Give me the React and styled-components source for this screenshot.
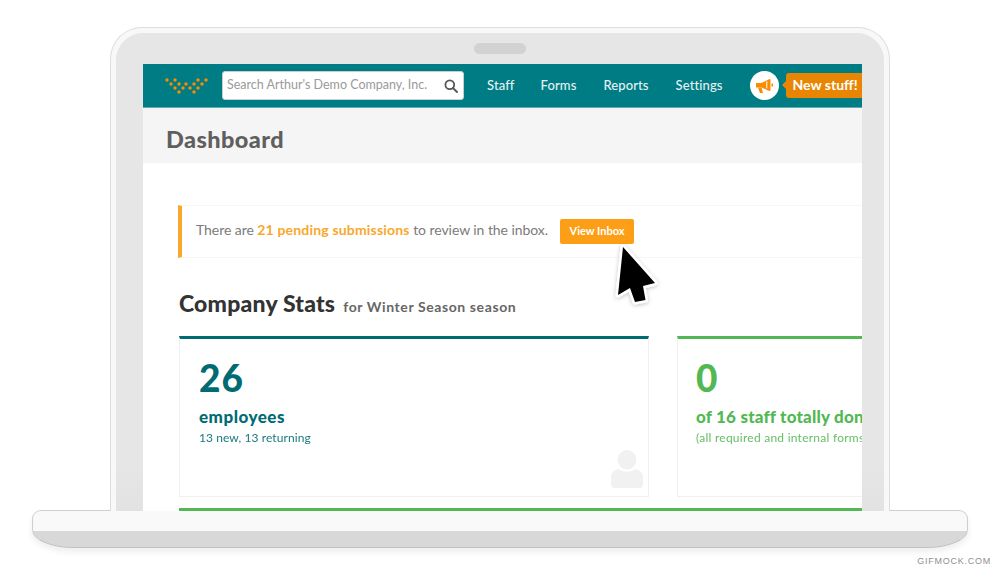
import React from "react";
import styled, { createGlobalStyle } from "styled-components";

const Global = createGlobalStyle`
  html, body { margin: 0; padding: 0; background: #fff; }
  * { box-sizing: border-box; }
`;

const UI = `"Lato", "Noto Sans", sans-serif`;

const Stage = styled.div`
  position: relative;
  width: 1000px;
  height: 575px;
  overflow: hidden;
  padding-top: 27px;
  display: flex;
  flex-direction: column;
  align-items: center;
  background: #fff;
  font-family: ${UI};
`;
const Lid = styled.div`
  position: relative;
  z-index: 2;
  width: 780px;
  height: 484px;
  padding: 5px 5px 0;
  background: #f8f8f8;
  border: 1px solid #ddd;
  border-bottom: 0;
  border-radius: 32px 32px 0 0;
`;
const Bezel = styled.div`
  height: 100%;
  display: flex;
  flex-direction: column;
  align-items: center;
  background: linear-gradient(#e6e6e6 90%, #e2e2e2);
  border-radius: 27px 27px 0 0;
  overflow: hidden;
`;
const Camera = styled.div`
  flex: none;
  width: 52px;
  height: 11px;
  margin: 10px 0;
  border-radius: 6px;
  background: #d2d2d2;
`;
const Screen = styled.div`
  align-self: stretch;
  flex: 1;
  margin: 0 22px 0 27px;
  background: #fff;
  overflow: hidden;
`;
const Nav = styled.nav`
  height: 44px;
  display: flex;
  align-items: center;
  background: #007c85;
  border-bottom: 1px solid #5fa9af;
  color: #e4f1f2;
`;
const Logo = styled.svg`
  flex: none;
  width: 44px;
  height: 16px;
  margin: 0 13px 0 22px;
`;
const Search = styled.div`
  flex: none;
  width: 242px;
  height: 29px;
  display: flex;
  align-items: center;
  justify-content: space-between;
  padding: 0 5px 0 4px;
  background: #fff;
  border: 1px solid #c9cfd0;
  border-radius: 3px;
  color: #9a9a9a;
  font-size: 12.5px;
  white-space: nowrap;
`;
const SearchText = styled.span`
  margin-bottom: 2px;
`;
const NavLink = styled.a`
  flex: none;
  margin-left: ${(p) => p.$gap}px;
  margin-bottom: 2px;
  font-size: 13px;
  font-weight: 500;
  letter-spacing: 0.1px;
`;
const Horn = styled.div`
  flex: none;
  width: 29px;
  height: 29px;
  margin-left: 27px;
  border-radius: 50%;
  background: #fff;
  display: flex;
  align-items: center;
  justify-content: center;
`;
const Badge = styled.div`
  position: relative;
  flex: none;
  width: 84px;
  height: 25px;
  margin-left: 7px;
  padding: 0 0 2px 7px;
  display: flex;
  align-items: center;
  background: #e88503;
  border-radius: 3px 0 0 3px;
  color: #fff;
  font-size: 14px;
  font-weight: 700;
  white-space: nowrap;
  &::before {
    content: "";
    position: absolute;
    left: -4px;
    top: 8px;
    border: 4px solid transparent;
    border-left: 0;
    border-right-color: #e88503;
  }
`;
const Header = styled.header`
  height: 55px;
  padding: 7px 0 0 23px;
  display: flex;
  align-items: center;
  background: #f5f5f5;
`;
const Title = styled.h1`
  margin: 0;
  font-size: 23.5px;
  font-weight: 900;
  letter-spacing: 0.4px;
  color: #5f5f5f;
`;
const Content = styled.main`
  width: 1000px;
  padding: 42px 0 0 36px;
`;
const Alert = styled.div`
  height: 53px;
  margin-left: -1px;
  display: flex;
  align-items: center;
  padding-left: 14px;
  background: #fff;
  border: 1px solid #f6f6f6;
  border-left: 4px solid #f9a72d;
  color: #7b7b7b;
  font-size: 14px;
  white-space: nowrap;
`;
const AlertText = styled.span`
  margin-bottom: 4px;
  letter-spacing: -0.06px;
`;
const Strong = styled.strong`
  color: #f9a72d;
  font-weight: 700;
  letter-spacing: 0.18px;
`;
const ViewBtn = styled.button`
  width: 74px;
  height: 25px;
  margin-left: 12px;
  padding: 0 0 2px;
  border: 0;
  border-radius: 2px;
  background: #fd9f16;
  color: #fff;
  font-family: inherit;
  font-size: 11px;
  font-weight: 700;
`;
const Heading = styled.h2`
  margin: 31px 0 19px;
  height: 28px;
  display: flex;
  align-items: baseline;
  gap: 8px;
  color: #333;
  font-size: 23px;
  font-weight: 900;
  letter-spacing: 0.2px;
  white-space: nowrap;
`;
const Sub = styled.span`
  color: #666;
  font-size: 14px;
  font-weight: 700;
  letter-spacing: 0.6px;
`;
const Cards = styled.div`
  display: flex;
  gap: 28px;
`;
const Card = styled.section`
  position: relative;
  flex: none;
  width: 470px;
  height: 161px;
  padding: 19px 19px 0 ${(p) => p.$inset}px;
  background: #fff;
  border: 1px solid #f0f0f0;
  border-top: 3px solid ${(p) => p.$color};
  color: ${(p) => p.$color};
  white-space: nowrap;
`;
const Num = styled.div`
  font-size: 37px;
  font-weight: 900;
  line-height: 40px;
  letter-spacing: 1px;
`;
const Label = styled.div`
  margin-top: 9px;
  font-size: 17px;
  font-weight: 900;
  line-height: 20px;
  letter-spacing: ${(p) => p.$spacing}px;
`;
const Note = styled.div`
  margin-top: 3px;
  font-size: 12px;
  line-height: 16px;
  letter-spacing: ${(p) => p.$spacing}px;
  opacity: 0.9;
`;
const Person = styled.svg`
  position: absolute;
  right: 5px;
  bottom: 8px;
  width: 32px;
  height: 38px;
`;
const NextBar = styled.div`
  height: 3px;
  margin-top: 11px;
  background: #53b853;
`;
const Base = styled.div`
  position: relative;
  z-index: 1;
  flex: none;
  width: 936px;
  height: 38px;
  margin-top: -1px;
  border: 1px solid #cfcfcf;
  border-bottom-color: #c0c0c0;
  border-radius: 9px 9px 42px 42px / 9px 9px 18px 18px;
  background: linear-gradient(#f9f9f9 0 20px, #d8d8d8 20px);
  box-shadow: 0 4px 6px rgba(0, 0, 0, 0.07);
`;
const Mark = styled.div`
  align-self: flex-end;
  margin: 8px 9px 0 0;
  font-family: "Liberation Sans", Arial, sans-serif;
  font-size: 9px;
  line-height: 11px;
  letter-spacing: 0.75px;
  color: #8f8f8f;
`;
const Pointer = styled.svg`
  position: absolute;
  z-index: 5;
  left: 605px;
  top: 235px;
  width: 65px;
  height: 80px;
  overflow: visible;
`;

const dots = [
  [2, 2], [10, 2], [33, 2], [41, 2],
  [6, 6], [14, 6], [21, 6], [29, 6], [37, 6],
  [10, 10], [18, 10], [25, 10], [33, 10],
  [14, 14], [29, 14],
];

export default function App() {
  return (
    <Stage>
      <Global />
      <Lid>
        <Bezel>
          <Camera />
          <Screen>
            <Nav>
              <Logo viewBox="0 0 44 16">
                {dots.map(([x, y]) => (
                  <circle key={`${x}-${y}`} cx={x} cy={y} r="1.7" fill="#fb8c00" />
                ))}
              </Logo>
              <Search>
                <SearchText>Search Arthur's Demo Company, Inc.</SearchText>
                <svg width="14" height="14" viewBox="0 0 14 14" fill="none" stroke="#555" strokeWidth="1.8">
                  <circle cx="5.8" cy="5.8" r="4.4" />
                  <path d="M9 9l4 4" strokeLinecap="round" />
                </svg>
              </Search>
              <NavLink $gap={23}>Staff</NavLink>
              <NavLink $gap={26}>Forms</NavLink>
              <NavLink $gap={27}>Reports</NavLink>
              <NavLink $gap={27}>Settings</NavLink>
              <Horn>
                <svg width="19" height="18" viewBox="0 0 19 18">
                  <path d="M1 6h5.500L14.500 2l1 .5v11l-1 .5-8-3.500H1z" fill="#fb8c00" />
                  <path d="M3 10.500h3.500l1.500 5.500H5z" fill="#fb8c00" />
                  <path d="M11.800 4.300v7" stroke="#fff" strokeWidth="1" />
                  <path d="M16.500 6.500h1.500v3h-1.500z" fill="#fb8c00" />
                </svg>
              </Horn>
              <Badge>New stuff!</Badge>
            </Nav>
            <Header>
              <Title>Dashboard</Title>
            </Header>
            <Content>
              <Alert>
                <AlertText>
                  There are <Strong>21 pending submissions</Strong> to review in the inbox.
                </AlertText>
                <ViewBtn>View Inbox</ViewBtn>
              </Alert>
              <Heading>
                Company Stats <Sub>for Winter Season season</Sub>
              </Heading>
              <Cards>
                <Card $color="#006b73" $inset={19}>
                  <Num>26</Num>
                  <Label $spacing={0.5}>employees</Label>
                  <Note $spacing={0.08}>13 new, 13 returning</Note>
                  <Person viewBox="0 0 34 39" preserveAspectRatio="none" fill="#f1f1f1">
                    <circle cx="17" cy="10" r="10" />
                    <path d="M8 19.500c5 3.500 13 3.500 18 0 5 1 8 4 8 9V35a4 4 0 0 1-4 4H4a4 4 0 0 1-4-4v-6.500c0-5 3-8 8-9z" />
                  </Person>
                </Card>
                <Card $color="#53b853" $inset={18}>
                  <Num>0</Num>
                  <Label $spacing={0.2}>of 16 staff totally done</Label>
                  <Note $spacing={0.25}>(all required and internal forms)</Note>
                </Card>
              </Cards>
              <NextBar />
            </Content>
          </Screen>
        </Bezel>
      </Lid>
      <Base />
      <Mark>GIFMOCK.COM</Mark>
      <Pointer viewBox="0 0 65 80">
        <defs>
          <filter id="cursorShadow" x="-30%" y="-30%" width="160%" height="160%">
            <feDropShadow dx="0" dy="1" stdDeviation="2" floodOpacity="0.25" />
          </filter>
        </defs>
        <path
          d="M18 12 L50 48 L38 51 L40.500 65 L30 67 L25 53 L13 60 Z"
          fill="#000"
          stroke="#fff"
          strokeWidth="5"
          strokeLinejoin="round"
          paintOrder="stroke"
          filter="url(#cursorShadow)"
        />
      </Pointer>
    </Stage>
  );
}
